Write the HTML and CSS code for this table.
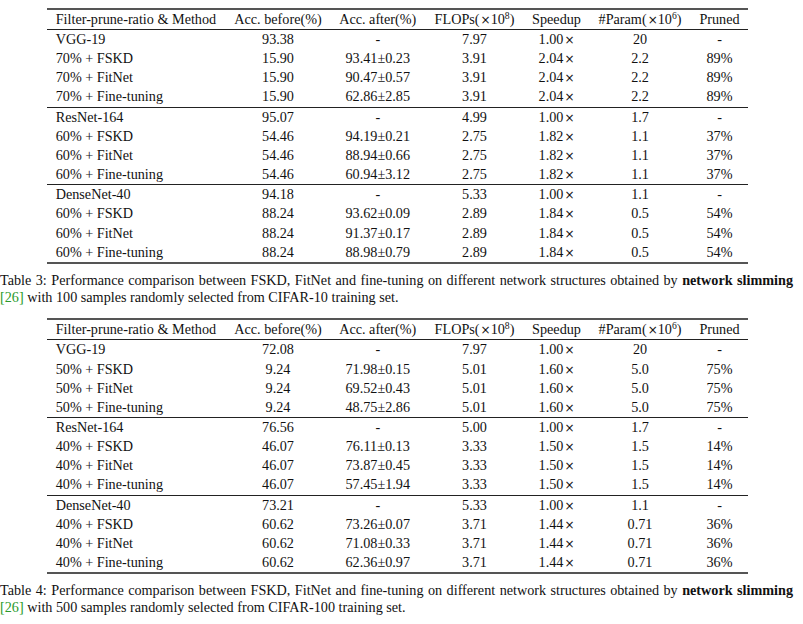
FILE: index.html
```html
<!DOCTYPE html>
<html lang="en">
<head>
<meta charset="utf-8">
<title>Tables 3 and 4</title>
<link rel="stylesheet" href="styles.css">
</head>
<body>
<div class="page">
  <table class="results">
    <colgroup>
      <col class="c-method"><col class="c-before"><col class="c-after"><col class="c-flops"><col class="c-speed"><col class="c-param"><col class="c-pruned">
    </colgroup>
    <thead>
      <tr><th class="l">Filter-prune-ratio &amp; Method</th><th>Acc. before(%)</th><th>Acc. after(%)</th><th>FLOPs(<span class="x">×</span>10<sup>8</sup>)</th><th>Speedup</th><th>#Param(<span class="x">×</span>10<sup>6</sup>)</th><th>Pruned</th></tr>
    </thead>
    <tbody>
      <tr><td class="l">VGG-19</td><td>93.38</td><td>-</td><td>7.97</td><td>1.00<span class="x">×</span></td><td>20</td><td>-</td></tr>
      <tr><td class="l">70% + FSKD</td><td>15.90</td><td>93.41±0.23</td><td>3.91</td><td>2.04<span class="x">×</span></td><td>2.2</td><td>89%</td></tr>
      <tr><td class="l">70% + FitNet</td><td>15.90</td><td>90.47±0.57</td><td>3.91</td><td>2.04<span class="x">×</span></td><td>2.2</td><td>89%</td></tr>
      <tr><td class="l">70% + Fine-tuning</td><td>15.90</td><td>62.86±2.85</td><td>3.91</td><td>2.04<span class="x">×</span></td><td>2.2</td><td>89%</td></tr>
    </tbody>
    <tbody>
      <tr><td class="l">ResNet-164</td><td>95.07</td><td>-</td><td>4.99</td><td>1.00<span class="x">×</span></td><td>1.7</td><td>-</td></tr>
      <tr><td class="l">60% + FSKD</td><td>54.46</td><td>94.19±0.21</td><td>2.75</td><td>1.82<span class="x">×</span></td><td>1.1</td><td>37%</td></tr>
      <tr><td class="l">60% + FitNet</td><td>54.46</td><td>88.94±0.66</td><td>2.75</td><td>1.82<span class="x">×</span></td><td>1.1</td><td>37%</td></tr>
      <tr><td class="l">60% + Fine-tuning</td><td>54.46</td><td>60.94±3.12</td><td>2.75</td><td>1.82<span class="x">×</span></td><td>1.1</td><td>37%</td></tr>
    </tbody>
    <tbody>
      <tr><td class="l">DenseNet-40</td><td>94.18</td><td>-</td><td>5.33</td><td>1.00<span class="x">×</span></td><td>1.1</td><td>-</td></tr>
      <tr><td class="l">60% + FSKD</td><td>88.24</td><td>93.62±0.09</td><td>2.89</td><td>1.84<span class="x">×</span></td><td>0.5</td><td>54%</td></tr>
      <tr><td class="l">60% + FitNet</td><td>88.24</td><td>91.37±0.17</td><td>2.89</td><td>1.84<span class="x">×</span></td><td>0.5</td><td>54%</td></tr>
      <tr><td class="l">60% + Fine-tuning</td><td>88.24</td><td>88.98±0.79</td><td>2.89</td><td>1.84<span class="x">×</span></td><td>0.5</td><td>54%</td></tr>
    </tbody>
  </table>
  <p class="caption">Table 3: Performance comparison between FSKD, FitNet and fine-tuning on different network structures obtained by <b>network slimming</b> <span class="cite">[26]</span> with 100 samples randomly selected from CIFAR-10 training set.</p>

  <table class="results">
    <colgroup>
      <col class="c-method"><col class="c-before"><col class="c-after"><col class="c-flops"><col class="c-speed"><col class="c-param"><col class="c-pruned">
    </colgroup>
    <thead>
      <tr><th class="l">Filter-prune-ratio &amp; Method</th><th>Acc. before(%)</th><th>Acc. after(%)</th><th>FLOPs(<span class="x">×</span>10<sup>8</sup>)</th><th>Speedup</th><th>#Param(<span class="x">×</span>10<sup>6</sup>)</th><th>Pruned</th></tr>
    </thead>
    <tbody>
      <tr><td class="l">VGG-19</td><td>72.08</td><td>-</td><td>7.97</td><td>1.00<span class="x">×</span></td><td>20</td><td>-</td></tr>
      <tr><td class="l">50% + FSKD</td><td>9.24</td><td>71.98±0.15</td><td>5.01</td><td>1.60<span class="x">×</span></td><td>5.0</td><td>75%</td></tr>
      <tr><td class="l">50% + FitNet</td><td>9.24</td><td>69.52±0.43</td><td>5.01</td><td>1.60<span class="x">×</span></td><td>5.0</td><td>75%</td></tr>
      <tr><td class="l">50% + Fine-tuning</td><td>9.24</td><td>48.75±2.86</td><td>5.01</td><td>1.60<span class="x">×</span></td><td>5.0</td><td>75%</td></tr>
    </tbody>
    <tbody>
      <tr><td class="l">ResNet-164</td><td>76.56</td><td>-</td><td>5.00</td><td>1.00<span class="x">×</span></td><td>1.7</td><td>-</td></tr>
      <tr><td class="l">40% + FSKD</td><td>46.07</td><td>76.11±0.13</td><td>3.33</td><td>1.50<span class="x">×</span></td><td>1.5</td><td>14%</td></tr>
      <tr><td class="l">40% + FitNet</td><td>46.07</td><td>73.87±0.45</td><td>3.33</td><td>1.50<span class="x">×</span></td><td>1.5</td><td>14%</td></tr>
      <tr><td class="l">40% + Fine-tuning</td><td>46.07</td><td>57.45±1.94</td><td>3.33</td><td>1.50<span class="x">×</span></td><td>1.5</td><td>14%</td></tr>
    </tbody>
    <tbody>
      <tr><td class="l">DenseNet-40</td><td>73.21</td><td>-</td><td>5.33</td><td>1.00<span class="x">×</span></td><td>1.1</td><td>-</td></tr>
      <tr><td class="l">40% + FSKD</td><td>60.62</td><td>73.26±0.07</td><td>3.71</td><td>1.44<span class="x">×</span></td><td>0.71</td><td>36%</td></tr>
      <tr><td class="l">40% + FitNet</td><td>60.62</td><td>71.08±0.33</td><td>3.71</td><td>1.44<span class="x">×</span></td><td>0.71</td><td>36%</td></tr>
      <tr><td class="l">40% + Fine-tuning</td><td>60.62</td><td>62.36±0.97</td><td>3.71</td><td>1.44<span class="x">×</span></td><td>0.71</td><td>36%</td></tr>
    </tbody>
  </table>
  <p class="caption">Table 4: Performance comparison between FSKD, FitNet and fine-tuning on different network structures obtained by <b>network slimming</b> <span class="cite">[26]</span> with 500 samples randomly selected from CIFAR-100 training set.</p>
</div>
</body>
</html>
```

FILE: styles.css
```css
html, body {
  margin: 0;
  padding: 0;
  background: #ffffff;
}

.page {
  width: 793px;
  padding-top: 8px;
  font-family: "Liberation Serif", "Times New Roman", serif;
  font-size: 14.2px;
  color: #111111;
}

.results {
  border-collapse: separate;
  border-spacing: 0;
  table-layout: fixed;
  width: 701px;
  margin-left: 47px;
  border-top: 2px solid #555555;
  border-bottom: 2px solid #555555;
}

.c-method { width: 178.5px; }
.c-before { width: 105px; }
.c-after { width: 94.5px; }
.c-flops { width: 99px; }
.c-speed { width: 65px; }
.c-param { width: 102px; }
.c-pruned { width: 57px; }

.results th,
.results td {
  padding: 0 0 1px 0;
  text-align: center;
  font-weight: normal;
  white-space: nowrap;
  line-height: 18.15px;
}

.results th {
  line-height: 18px;
  border-bottom: 1px solid #222222;
}

.results .l {
  text-align: left;
  padding-left: 8.7px;
}

.results tbody + tbody tr:first-child td {
  border-top: 1px solid #222222;
}

.results sup {
  font-size: 0.68em;
  line-height: 0;
  vertical-align: 0.55em;
}

.x {
  font-family: "DejaVu Sans", sans-serif;
  font-size: 12px;
  line-height: 0;
  padding-left: 1px;
}

.caption {
  margin: 8px 0 12.5px 0;
  text-align: justify;
  line-height: 17px;
}

.caption b {
  font-weight: bold;
}

.cite {
  color: #2a9a2a;
}
```
